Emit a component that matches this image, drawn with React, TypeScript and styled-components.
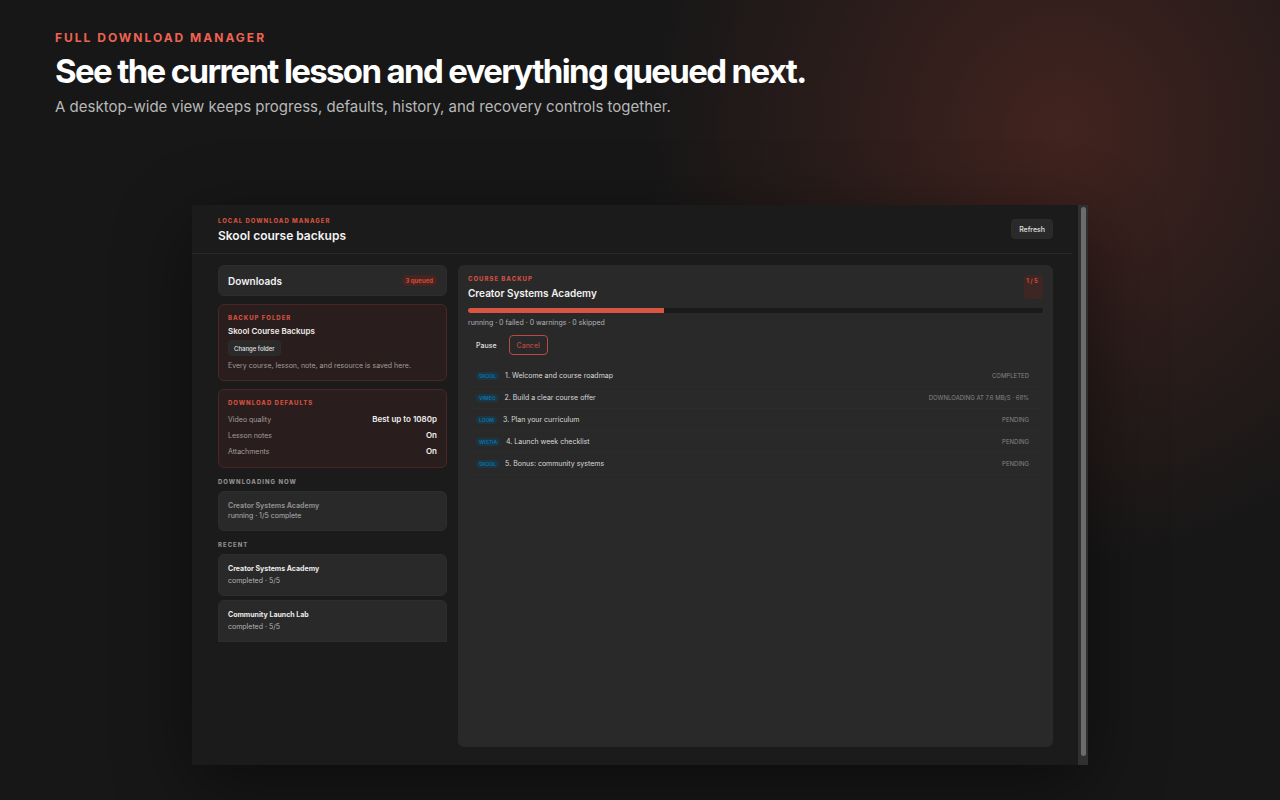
import React from "react";
import styled, { createGlobalStyle } from "styled-components";

const Global = createGlobalStyle`
  *, *::before, *::after { box-sizing: border-box; }
  body {
    margin: 0;
    background: #171717;
    color: #f2f2f2;
    font-family: Inter, "Liberation Sans", sans-serif;
  }
  h1, h2, h3, p, ul, ol, dl, dd { margin: 0; padding: 0; }
  ul, ol { list-style: none; }
  button { font-family: inherit; margin: 0; padding: 0; cursor: pointer; }
`;

const Page = styled.div`
  min-height: 100vh;
  padding: 30px 55px 34px;
  overflow: hidden;
  background:
    radial-gradient(ellipse 420px 440px at 83% 130px, rgba(226, 80, 60, 0.21), rgba(226, 80, 60, 0.1) 50%, rgba(226, 80, 60, 0) 100%),
    #171717;
`;

const Hero = styled.header`
  display: flex;
  flex-direction: column;
`;

const HeroKicker = styled.p`
  font-size: 12px;
  line-height: 16px;
  font-weight: 700;
  letter-spacing: 2px;
  text-transform: uppercase;
  color: #ee6352;
`;

const HeroTitle = styled.h1`
  margin-top: 4px;
  font-size: 33px;
  line-height: 42px;
  font-weight: 700;
  letter-spacing: -0.05em;
  color: #fff;
`;

const HeroText = styled.p`
  margin-top: 4px;
  font-size: 15px;
  line-height: 22px;
  color: #b8b8b8;
`;

const AppWindow = styled.section`
  display: flex;
  width: 70vw;
  aspect-ratio: 8 / 5;
  margin: 87px auto 0;
  background: #1b1b1b;
  box-shadow: 0 20px 70px rgba(0, 0, 0, 0.45);
`;

const Screen = styled.div`
  flex: 1;
  min-width: 0;
  display: flex;
  flex-direction: column;
`;

const Scrollbar = styled.div`
  width: 10px;
  padding: 2px 2px 9px 3px;
  display: flex;
  background: #303030;
`;

const Thumb = styled.div`
  flex: 1;
  border-radius: 3px;
  background: #6c6c6c;
`;

const TopBar = styled.header`
  display: flex;
  align-items: center;
  justify-content: space-between;
  height: 49px;
  margin-right: 6px;
  padding: 0 19px 0 26px;
  border-bottom: 1px solid #2a2a2a;
`;

const Titles = styled.div`
  display: flex;
  flex-direction: column;
  gap: 2px;
`;

const TopTitles = styled(Titles)`
  padding-top: 2px;
  gap: 3px;
`;

const Kicker = styled.p<{ $muted?: boolean }>`
  font-size: 6px;
  line-height: 8px;
  font-weight: 800;
  letter-spacing: 1px;
  text-transform: uppercase;
  color: ${(p) => (p.$muted ? "#8e8e8e" : "#d2503f")};
`;

const Heading = styled.h2<{ $size?: number }>`
  font-size: ${(p) => p.$size ?? 10}px;
  line-height: 16px;
  font-weight: 600;
  color: #f2f2f2;
`;

const Button = styled.button<{ $kind?: "small" | "ghost" | "danger" }>`
  align-self: flex-start;
  height: ${(p) => (p.$kind === "small" ? 16 : 20)}px;
  padding: 0 ${(p) => (p.$kind === "small" ? 5 : 7)}px;
  border: 1px solid
    ${(p) => (p.$kind === "danger" ? "#b84a42" : p.$kind === "ghost" ? "transparent" : "#2c2c2c")};
  border-radius: 4px;
  background: ${(p) => (p.$kind === "danger" || p.$kind === "ghost" ? "transparent" : "#2a2a2a")};
  color: ${(p) => (p.$kind === "danger" ? "#b84a42" : "#e0e0e0")};
  font-size: ${(p) => (p.$kind === "small" ? 6 : 7)}px;
  font-weight: 500;
`;

const TopButton = styled(Button)`
  align-self: center;
`;

const Columns = styled.div`
  flex: 1;
  display: grid;
  grid-template-columns: 229fr 595fr;
  gap: 11px;
  padding: 11px 25px 18px 26px;
`;

const Sidebar = styled.aside`
  display: flex;
  flex-direction: column;
`;

const Card = styled.div<{ $tint?: boolean; $cut?: boolean }>`
  display: flex;
  flex-direction: column;
  padding: 9px 9px ${(p) => (p.$tint ? 8 : 9)}px;
  border: 1px solid ${(p) => (p.$tint ? "#4a2725" : "#2d2d2d")};
  border-radius: ${(p) => (p.$cut ? "6px 6px 0 0" : "6px")};
  background: ${(p) => (p.$tint ? "#291e1d" : "#292929")};
`;

const SummaryCard = styled(Card)`
  flex-direction: row;
  align-items: center;
  justify-content: space-between;
  height: 31px;
  padding: 0 9px;
`;

const BackupCard = styled(Card)`
  margin-top: 8px;
  gap: 4px;
`;

const DefaultsCard = styled(Card)`
  margin-top: 8px;
`;

const Pill = styled.span`
  padding: 0 4px;
  border-radius: 6px;
  background: #47241f;
  color: #cf4b3b;
  font-size: 6px;
  line-height: 11px;
  font-weight: 700;
`;

const Name = styled.h3<{ $muted?: boolean; $large?: boolean }>`
  font-size: ${(p) => (p.$large ? 8 : 7)}px;
  line-height: 10px;
  font-weight: ${(p) => (p.$large ? 600 : 700)};
  color: ${(p) => (p.$muted ? "#8c8c8c" : "#ececec")};
`;

const Detail = styled.p`
  font-size: 7px;
  line-height: 10px;
  color: #b2b2b2;
`;

const Note = styled(Detail)`
  line-height: 12px;
  color: #a29c9b;
`;

const Defaults = styled.dl`
  margin-top: 4px;
`;

const DefaultRow = styled.div`
  display: flex;
  align-items: center;
  justify-content: space-between;
  height: 16px;

  dt { font-size: 7px; color: #a39d9c; }
  dd { font-size: 8px; color: #f0eded; font-weight: 600; }
`;

const Group = styled.section`
  display: flex;
  flex-direction: column;
  margin-top: 10px;
`;

const GroupCards = styled.div`
  display: flex;
  flex-direction: column;
  gap: 4px;
  margin-top: 5px;
`;

const RecentCard = styled(Card)`
  gap: 2px;
`;

const Panel = styled.main`
  display: flex;
  flex-direction: column;
  padding: 10px;
  border-radius: 6px;
  background: #292929;
`;

const PanelHead = styled.div`
  display: flex;
  align-items: flex-start;
  justify-content: space-between;
`;

const Count = styled.span`
  width: 19px;
  height: 24px;
  padding-right: 3px;
  border-radius: 3px;
  background: #3d2624;
  color: #cf4b3b;
  font-size: 6px;
  line-height: 11px;
  font-weight: 700;
  text-align: center;
`;

const Track = styled.div`
  height: 5px;
  margin-top: 7px;
  border-radius: 3px;
  background: #1a1a1b;
  overflow: hidden;
`;

const Fill = styled.div`
  height: 100%;
  background: #d95441;
`;

const Status = styled(Detail)`
  margin-top: 5px;
`;

const Actions = styled.div`
  display: flex;
  gap: 4px;
  margin-top: 7px;
`;

const Lessons = styled.ol`
  margin-top: 10px;
`;

const Lesson = styled.li`
  display: flex;
  align-items: center;
  gap: 6px;
  height: 22px;
  padding: 0 14px 0 8px;
  border-bottom: 1px solid #2c2c2c;
  font-size: 7px;
  color: #dadada;
`;

const Source = styled.span`
  padding: 0 3px;
  border-radius: 4px;
  background: #193744;
  color: #1272a8;
  font-size: 5px;
  line-height: 8px;
  font-weight: 600;
`;

const State = styled.span`
  margin-left: auto;
  font-size: 6px;
  color: #858585;
  text-transform: uppercase;
`;

const defaults = [
  ["Video quality", "Best up to 1080p"],
  ["Lesson notes", "On"],
  ["Attachments", "On"],
];

const lessons = [
  { source: "SKOOL", title: "1. Welcome and course roadmap", state: "Completed" },
  { source: "VIMEO", title: "2. Build a clear course offer", state: "Downloading at 7.6 MB/s · 68%" },
  { source: "LOOM", title: "3. Plan your curriculum", state: "Pending" },
  { source: "WISTIA", title: "4. Launch week checklist", state: "Pending" },
  { source: "SKOOL", title: "5. Bonus: community systems", state: "Pending" },
];

const progress = 34;

export default function App() {
  return (
    <>
      <Global />
      <Page>
        <Hero>
          <HeroKicker>Full download manager</HeroKicker>
          <HeroTitle>See the current lesson and everything queued next.</HeroTitle>
          <HeroText>
            A desktop-wide view keeps progress, defaults, history, and recovery controls together.
          </HeroText>
        </Hero>

        <AppWindow>
          <Screen>
            <TopBar>
              <TopTitles>
                <Kicker>Local download manager</Kicker>
                <Heading $size={12}>Skool course backups</Heading>
              </TopTitles>
              <TopButton type="button">Refresh</TopButton>
            </TopBar>

            <Columns>
              <Sidebar>
                <SummaryCard>
                  <Heading>Downloads</Heading>
                  <Pill>3 queued</Pill>
                </SummaryCard>

                <BackupCard $tint>
                  <Kicker>Backup folder</Kicker>
                  <Name $large>Skool Course Backups</Name>
                  <Button type="button" $kind="small">Change folder</Button>
                  <Note>Every course, lesson, note, and resource is saved here.</Note>
                </BackupCard>

                <DefaultsCard $tint>
                  <Kicker>Download defaults</Kicker>
                  <Defaults>
                    {defaults.map(([label, value]) => (
                      <DefaultRow key={label}>
                        <dt>{label}</dt>
                        <dd>{value}</dd>
                      </DefaultRow>
                    ))}
                  </Defaults>
                </DefaultsCard>

                <Group>
                  <Kicker $muted>Downloading now</Kicker>
                  <GroupCards>
                    <Card>
                      <Name $muted>Creator Systems Academy</Name>
                      <Detail>running · 1/5 complete</Detail>
                    </Card>
                  </GroupCards>
                </Group>

                <Group>
                  <Kicker $muted>Recent</Kicker>
                  <GroupCards>
                    <RecentCard>
                      <Name>Creator Systems Academy</Name>
                      <Detail>completed · 5/5</Detail>
                    </RecentCard>
                    <RecentCard $cut>
                      <Name>Community Launch Lab</Name>
                      <Detail>completed · 5/5</Detail>
                    </RecentCard>
                  </GroupCards>
                </Group>
              </Sidebar>

              <Panel>
                <PanelHead>
                  <Titles>
                    <Kicker>Course backup</Kicker>
                    <Heading>Creator Systems Academy</Heading>
                  </Titles>
                  <Count>1 / 5</Count>
                </PanelHead>
                <Track role="progressbar" aria-label="Backup progress" aria-valuenow={progress}>
                  <Fill style={{ width: `${progress}%` }} />
                </Track>
                <Status>running · 0 failed · 0 warnings · 0 skipped</Status>
                <Actions>
                  <Button type="button" $kind="ghost">Pause</Button>
                  <Button type="button" $kind="danger">Cancel</Button>
                </Actions>
                <Lessons>
                  {lessons.map((lesson) => (
                    <Lesson key={lesson.title}>
                      <Source>{lesson.source}</Source>
                      <span>{lesson.title}</span>
                      <State>{lesson.state}</State>
                    </Lesson>
                  ))}
                </Lessons>
              </Panel>
            </Columns>
          </Screen>
          <Scrollbar>
            <Thumb />
          </Scrollbar>
        </AppWindow>
      </Page>
    </>
  );
}
